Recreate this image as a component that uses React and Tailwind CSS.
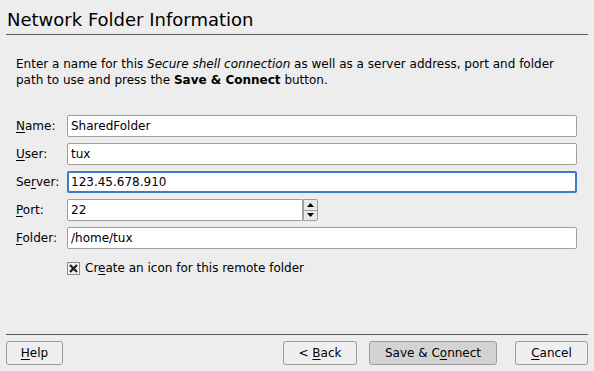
import React from "react";

function Field({ label, mnemonic, value, focused }) {
  const i = label.indexOf(mnemonic);
  return (
    <div className="flex items-center h-[22px]">
      <label className="w-[51px] shrink-0">
        {label.slice(0, i)}
        <span className="underline underline-offset-2">{mnemonic}</span>
        {label.slice(i + 1)}
      </label>
      <div
        className={
          "w-[510px] h-[22px] bg-white rounded-[2px] flex items-center pl-[2px] text-[12px] " +
          (focused
            ? "border-2 border-[#3f78c8]"
            : "border border-[#a0a0a0] pl-[3px]")
        }
      >
        {value}
      </div>
    </div>
  );
}

function Button({ children, className = "" }) {
  return (
    <button
      className={
        "h-[24px] border border-[#9c9c9c] rounded-[3px] flex items-center justify-center text-[12px] text-black " +
        className
      }
    >
      {children}
    </button>
  );
}

export default function App() {
  return (
    <div className="w-[594px] h-[371px] bg-[#ededed] flex flex-col font-['DejaVu_Sans',sans-serif] text-black text-[12px] overflow-hidden">
      {/* header */}
      <h1 className="pt-[9px] pl-[7px] text-[18px] leading-[22px] font-normal">
        Network Folder Information
      </h1>
      <div className="mx-[6px] mt-[3px] h-px bg-[#5a5a5a]"></div>

      {/* description */}
      <p className="mt-[21px] pl-[16px] leading-[16px]">
        Enter a name for this <i>Secure shell connection</i> as well as a server address, port and folder
        <br />
        path to use and press the <b>Save &amp; Connect</b> button.
      </p>

      {/* form */}
      <div className="mt-[27px] pl-[16px] flex flex-col gap-[6px]">
        <Field label="Name:" mnemonic="N" value="SharedFolder" />
        <Field label="User:" mnemonic="U" value="tux" />
        <Field label="Server:" mnemonic="r" value="123.45.678.910" focused />
        <div className="flex items-center h-[22px]">
          <label className="w-[51px] shrink-0">
            <span className="underline underline-offset-2">P</span>ort:
          </label>
          <div className="w-[236px] h-[22px] bg-white border border-[#a0a0a0] rounded-l-[2px] flex items-center pl-[3px]">
            22
          </div>
          <div className="w-[15px] h-[22px] flex flex-col border border-[#a0a0a0] rounded-r-[2px] bg-[#e8e8e8]">
            <div className="flex-1 flex items-center justify-center border-b border-[#a0a0a0]">
              <svg width="7" height="4" viewBox="0 0 7 4">
                <path d="M0 4 L3.5 0 L7 4 Z" fill="#000" />
              </svg>
            </div>
            <div className="flex-1 flex items-center justify-center">
              <svg width="7" height="4" viewBox="0 0 7 4">
                <path d="M0 0 L3.5 4 L7 0 Z" fill="#000" />
              </svg>
            </div>
          </div>
        </div>
        <Field label="Folder:" mnemonic="F" value="/home/tux" />
        <div className="flex items-center mt-[4px] pl-[51px]">
          <div className="w-[13px] h-[13px] border border-[#8a8a8a] bg-[#f4f4f4] flex items-center justify-center">
            <svg width="9" height="9" viewBox="0 0 9 9">
              <path d="M1 1 L8 8 M8 1 L1 8" stroke="#222" strokeWidth="2.4" />
            </svg>
          </div>
          <span className="ml-[5px]">
            Cr<span className="underline underline-offset-2">e</span>ate an icon for this remote folder
          </span>
        </div>
      </div>

      <div className="flex-1"></div>

      {/* footer */}
      <div className="mx-[6px] h-px bg-[#5a5a5a]"></div>
      <div className="flex items-center mt-[6px] mb-[6px] px-[6px]">
        <Button className="w-[57px] bg-[#efefef]">
          <span className="underline underline-offset-2">H</span>elp
        </Button>
        <div className="flex-1"></div>
        <Button className="w-[74px] bg-[#efefef]">
          &lt;&nbsp;<span className="underline underline-offset-2">B</span>ack
        </Button>
        <Button className="w-[128px] ml-[12px] bg-[#d3d3d3]">
          Save &amp; C<span className="underline underline-offset-2">o</span>nnect
        </Button>
        <Button className="w-[73px] ml-[18px] bg-[#efefef]">
          <span className="underline underline-offset-2">C</span>ancel
        </Button>
      </div>
    </div>
  );
}
